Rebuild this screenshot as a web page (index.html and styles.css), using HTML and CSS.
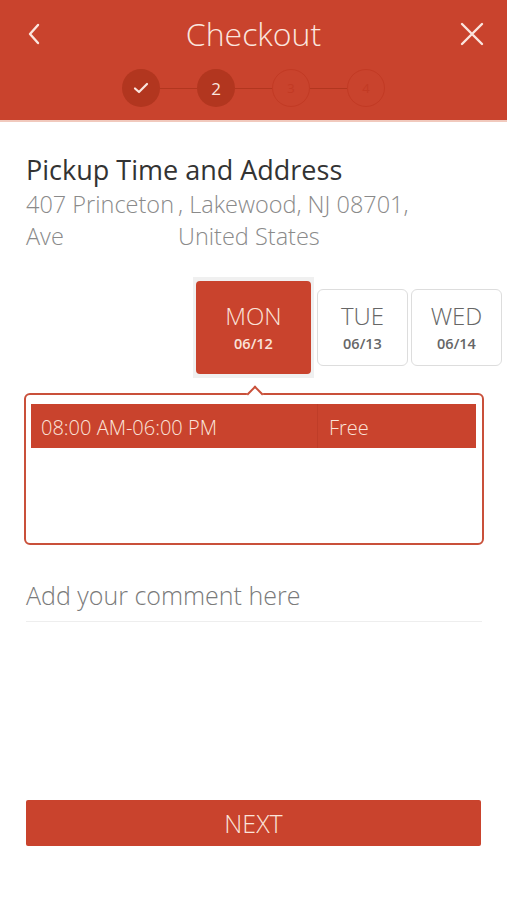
FILE: index.html
```html
<html>
<head>
    <title>Checkout</title>
    <link rel="stylesheet" href="styles.css">
</head>
<body>
    <div class="header">
        <div class="top-bar">
            <svg class="icon" width="24" height="24" viewBox="0 0 24 24">
                <path d="M15 3 L7 12 L15 21" fill="none" stroke="#fbe6df" stroke-width="2.4" stroke-linecap="round" stroke-linejoin="round"/>
            </svg>
            <h1>Checkout</h1>
            <svg class="icon" width="24" height="24" viewBox="0 0 24 24">
                <path d="M2 2 L22 22 M22 2 L2 22" fill="none" stroke="#fbe6df" stroke-width="2.4" stroke-linecap="round"/>
            </svg>
        </div>
        <div class="stepper">
            <div class="step done">
                <svg width="16" height="16" viewBox="0 0 16 16">
                    <path d="M2 8.5 L6 12 L14 4" fill="none" stroke="#fbe6df" stroke-width="2.2" stroke-linecap="round" stroke-linejoin="round"/>
                </svg>
            </div>
            <div class="step-line"></div>
            <div class="step current">2</div>
            <div class="step-line"></div>
            <div class="step todo">3</div>
            <div class="step-line"></div>
            <div class="step todo">4</div>
        </div>
    </div>

    <div class="content">
        <h2>Pickup Time and Address</h2>
        <div class="address">
            <div class="street">407 Princeton Ave</div>
            <div class="city">, Lakewood, NJ 08701, United States</div>
        </div>

        <div class="days">
            <div class="day-frame">
                <div class="day selected">
                    <div class="day-name">MON</div>
                    <div class="day-date">06/12</div>
                </div>
            </div>
            <div class="day">
                <div class="day-name">TUE</div>
                <div class="day-date">06/13</div>
            </div>
            <div class="day">
                <div class="day-name">WED</div>
                <div class="day-date">06/14</div>
            </div>
        </div>

        <div class="slots">
            <div class="slot">
                <div class="slot-time">08:00 AM-06:00 PM</div>
                <div class="slot-price">Free</div>
            </div>
        </div>

        <div class="comment">Add your comment here</div>

        <div class="next">NEXT</div>
    </div>
</body>
</html>
```

FILE: styles.css
```css
body {
    margin: 0;
    font-family: "Open Sans", sans-serif;
    background: #ffffff;
    color: #333333;
}
.header {
    background-color: #c9432d;
    height: 122px;
    border-bottom: 2px solid #f1c9bd;
    box-sizing: border-box;
}
.top-bar {
    display: flex;
    justify-content: space-between;
    align-items: center;
    height: 68px;
    padding: 0 23px 0 23px;
}
.top-bar h1 {
    margin: 0;
    font-size: 32px;
    font-weight: 300;
    color: #fbe6df;
    padding-bottom: 2px;
}
.icon {
    display: block;
}
.stepper {
    display: flex;
    justify-content: center;
    align-items: center;
    padding-top: 1px;
}
.step {
    width: 38px;
    height: 38px;
    border-radius: 50%;
    display: flex;
    justify-content: center;
    align-items: center;
    font-size: 17px;
    box-sizing: border-box;
}
.step.done, .step.current {
    background-color: #b2361f;
    color: #fbe6df;
}
.step.todo {
    border: 1px solid #c23a24;
    color: #c23a24;
    font-size: 13px;
}
.step-line {
    width: 37px;
    height: 1px;
    background-color: #b2361f;
}
.content {
    padding: 0 23px 0 26px;
}
h2 {
    margin: 30px 0 0 0;
    font-size: 27px;
    font-weight: 400;
    color: #333333;
    line-height: 36px;
}
.address {
    display: flex;
    font-size: 23.5px;
    font-weight: 300;
    color: #8a8a8a;
    line-height: 32px;
}
.street {
    width: 152px;
}
.city {
    width: 280px;
}
.days {
    display: flex;
    align-items: center;
    margin: 25px -23px 0 167px;
    overflow: hidden;
    gap: 3px;
}
.day-frame {
    background-color: #f0f0f0;
    padding: 4px 3px;
}
.day {
    flex-shrink: 0;
    width: 91px;
    height: 77px;
    border: 1px solid #dddddd;
    border-radius: 6px;
    box-sizing: border-box;
    display: flex;
    flex-direction: column;
    justify-content: center;
    align-items: center;
    color: #666666;
}
.day.selected {
    width: 115px;
    height: 93px;
    border: 0;
    border-radius: 4px;
    background-color: #c9432d;
    color: #fbe3da;
}
.day-name {
    font-size: 24px;
    font-weight: 300;
    line-height: 28px;
}
.day-date {
    font-size: 14.5px;
    font-weight: 600;
    margin-top: 4px;
}
.slots {
    position: relative;
    margin: 15px 0 0 -2px;
    width: 460px;
    height: 152px;
    border: 2px solid #c9503a;
    border-radius: 6px;
    box-sizing: border-box;
    padding: 9px 6px 0 5px;
}
.slots::before {
    content: "";
    position: absolute;
    top: -7px;
    left: 223px;
    width: 10px;
    height: 10px;
    background: #ffffff;
    border-top: 2px solid #c9503a;
    border-left: 2px solid #c9503a;
    transform: rotate(45deg);
}
.slot {
    display: flex;
    height: 44px;
    align-items: center;
    background-color: #c9432d;
    color: #fbe3da;
    font-size: 20px;
    font-weight: 300;
}
.slot-time {
    width: 287px;
    box-sizing: border-box;
    padding-left: 10px;
    padding-top: 3px;
    line-height: 41px;
    border-right: 1px solid #bf3d28;
}
.slot-price {
    padding-left: 11px;
    padding-top: 3px;
}
.comment {
    margin: 34px 0 0 0;
    font-size: 25px;
    font-weight: 300;
    color: #7a7a7a;
    line-height: 32px;
    padding-bottom: 10px;
    border-bottom: 1px solid #eeeeee;
    width: 456px;
}
.next {
    margin-top: 178px;
    width: 455px;
    height: 46px;
    background-color: #c9432d;
    border-radius: 2px;
    color: #fbe3da;
    font-size: 25px;
    font-weight: 300;
    display: flex;
    justify-content: center;
    align-items: center;
}
```
